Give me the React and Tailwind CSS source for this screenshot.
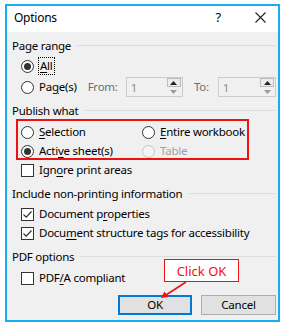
import React from "react";

const font = { fontFamily: '"Noto Sans", "Open Sans", sans-serif' };

function Radio({ checked, disabled }) {
  return (
    <span
      className={
        "w-[13px] h-[13px] rounded-full border flex items-center justify-center shrink-0 " +
        (disabled ? "border-[#c4c4c4] bg-[#f4f4f4]" : "border-[#333333] bg-white")
      }
    >
      {checked && <span className="w-[7px] h-[7px] rounded-full bg-[#333333]" />}
    </span>
  );
}

function Check({ checked }) {
  return (
    <span className="w-[13px] h-[13px] border border-[#333333] bg-white flex items-center justify-center shrink-0">
      {checked && (
        <svg width="11" height="11" viewBox="0 0 11 11">
          <path d="M1.5 5.5 L4.2 8.2 L9.5 2.5" fill="none" stroke="#333333" strokeWidth="1.2" />
        </svg>
      )}
    </span>
  );
}

function U({ children }) {
  return <span className="underline underline-offset-[2px]">{children}</span>;
}

function Header({ children, className = "" }) {
  return (
    <div className={"flex items-center h-[16px] " + className}>
      <span className="whitespace-nowrap leading-[16px]">{children}</span>
      <span className="flex-1 h-px bg-[#dcdcdc] ml-[6px] mt-[-2px]" />
    </div>
  );
}

function Spin({ className = "" }) {
  return (
    <div className={"h-[20px] border border-[#cccccc] bg-[#f0f0f0] flex items-center " + className}>
      <span className="flex-1 pl-[4px] text-[#8c8c8c] leading-[16px] mt-[2px]">1</span>
      <div className="w-[14px] h-[18px] flex flex-col mr-[1px]">
        <div className="h-[9px] border border-[#bcbcbc] bg-[#ececec] flex items-center justify-center">
          <svg width="7" height="4" viewBox="0 0 7 4">
            <path d="M0 4 L3.5 0 L7 4 Z" fill="#222" />
          </svg>
        </div>
        <div className="h-[9px] bg-[#f0f0f0] flex items-center justify-center">
          <svg width="7" height="4" viewBox="0 0 7 4">
            <path d="M0 0 L3.5 4 L7 0 Z" fill="#9a9a9a" />
          </svg>
        </div>
      </div>
    </div>
  );
}

export default function App() {
  return (
    <div className="w-[285px] h-[328px] bg-white relative overflow-hidden text-[11.5px] tracking-[-0.25px] text-black whitespace-nowrap" style={font}>
      <div className="ml-[5px] mt-[4px] w-[275px] h-[318px] border-2 border-[#13aff0] flex flex-col">
        {/* title bar */}
        <div className="h-[26px] bg-white flex items-center shrink-0">
          <span className="ml-[7px] text-[12px] leading-[16px] mt-[-2px]">Options</span>
          <span className="ml-auto mr-[34px] text-[13px] leading-[16px] mt-[-4px]">?</span>
          <svg width="11" height="11" viewBox="0 0 11 11" className="mr-[12px] mt-[-4px]">
            <path d="M0.5 0.5 L10.5 10.5 M10.5 0.5 L0.5 10.5" stroke="#222" strokeWidth="1.1" />
          </svg>
        </div>
        {/* body */}
        <div className="flex-1 bg-[#f0f0f0] pl-[5px] pr-[2px] flex flex-col">
          <Header className="mt-[6px]">Page range</Header>
          <div className="flex items-center h-[16px] mt-[4px] ml-[9px]">
            <Radio checked />
            <span className="ml-[4px] px-[1px] border border-dotted border-black leading-[14px] h-[18px] flex items-center">
              <U>A</U>ll
            </span>
          </div>
          <div className="flex items-center h-[20px] mt-[3px] ml-[9px]">
            <Radio />
            <span className="ml-[5px] leading-[16px]">
              Pa<U>g</U>e(s)
            </span>
            <span className="ml-[11px] text-[#6d6d6d] leading-[16px]">From:</span>
            <Spin className="w-[58px] ml-[8px]" />
            <span className="ml-[11px] text-[#6d6d6d] leading-[16px]">To:</span>
            <Spin className="w-[59px] ml-[9px]" />
          </div>

          <Header className="mt-[6px]">Publish what</Header>
          <div className="ml-[4px] w-[233px] h-[41px] border-2 border-[#ee1111] flex flex-col pt-[3px] gap-[3px]">
            <div className="flex items-center h-[16px]">
              <div className="flex items-center w-[124px] pl-[3px]">
                <Radio />
                <span className="ml-[5px] leading-[16px]">
                  <U>S</U>election
                </span>
              </div>
              <div className="flex items-center">
                <Radio />
                <span className="ml-[5px] leading-[16px]">
                  <U>E</U>ntire workbook
                </span>
              </div>
            </div>
            <div className="flex items-center h-[16px]">
              <div className="flex items-center w-[124px] pl-[3px]">
                <Radio checked />
                <span className="ml-[5px] leading-[16px]">
                  Acti<U>v</U>e sheet(s)
                </span>
              </div>
              <div className="flex items-center">
                <Radio disabled />
                <span className="ml-[5px] leading-[16px] text-[#a0a0a0]">Table</span>
              </div>
            </div>
          </div>
          <div className="flex items-center h-[16px] mt-[2px] ml-[9px]">
            <Check />
            <span className="ml-[5px] leading-[16px]">
              Ign<U>o</U>re print areas
            </span>
          </div>

          <Header className="mt-[8px]">Include non-printing information</Header>
          <div className="flex items-center h-[16px] mt-[4px] ml-[9px]">
            <Check checked />
            <span className="ml-[5px] leading-[16px]">
              Document p<U>r</U>operties
            </span>
          </div>
          <div className="flex items-center h-[16px] mt-[3px] ml-[9px]">
            <Check checked />
            <span className="ml-[5px] leading-[16px]">
              Docu<U>m</U>ent structure tags for accessibility
            </span>
          </div>

          <Header className="mt-[8px]">PDF options</Header>
          <div className="flex items-center h-[16px] mt-[5px] ml-[9px]">
            <Check />
            <span className="ml-[5px] leading-[16px]">
              PDF<U>/</U>A compliant
            </span>
          </div>

          <div className="flex justify-end gap-[9px] mt-[9px]">
            <div className="w-[74px] h-[20px] border-2 border-[#0078d7] bg-[#e1e1e1] flex items-center justify-center leading-[16px]">
              OK
            </div>
            <div className="w-[75px] h-[20px] border border-[#adadad] bg-[#e1e1e1] flex items-center justify-center leading-[16px]">
              Cancel
            </div>
          </div>
        </div>
      </div>

      {/* annotation */}
      <div className="absolute left-[164px] top-[259px] w-[75px] h-[23px] border border-[#ee1111] bg-white flex items-center justify-center text-[#ee1111] text-[13px] tracking-normal leading-[16px]">
        Click OK
      </div>
      <svg className="absolute left-0 top-0" width="285" height="328" viewBox="0 0 285 328">
        <line x1="186" y1="282" x2="166" y2="295" stroke="#ee1111" strokeWidth="1.5" />
        <path d="M161 298 L164.5 291.5 L168.5 297 Z" fill="#ee1111" />
      </svg>
    </div>
  );
}
